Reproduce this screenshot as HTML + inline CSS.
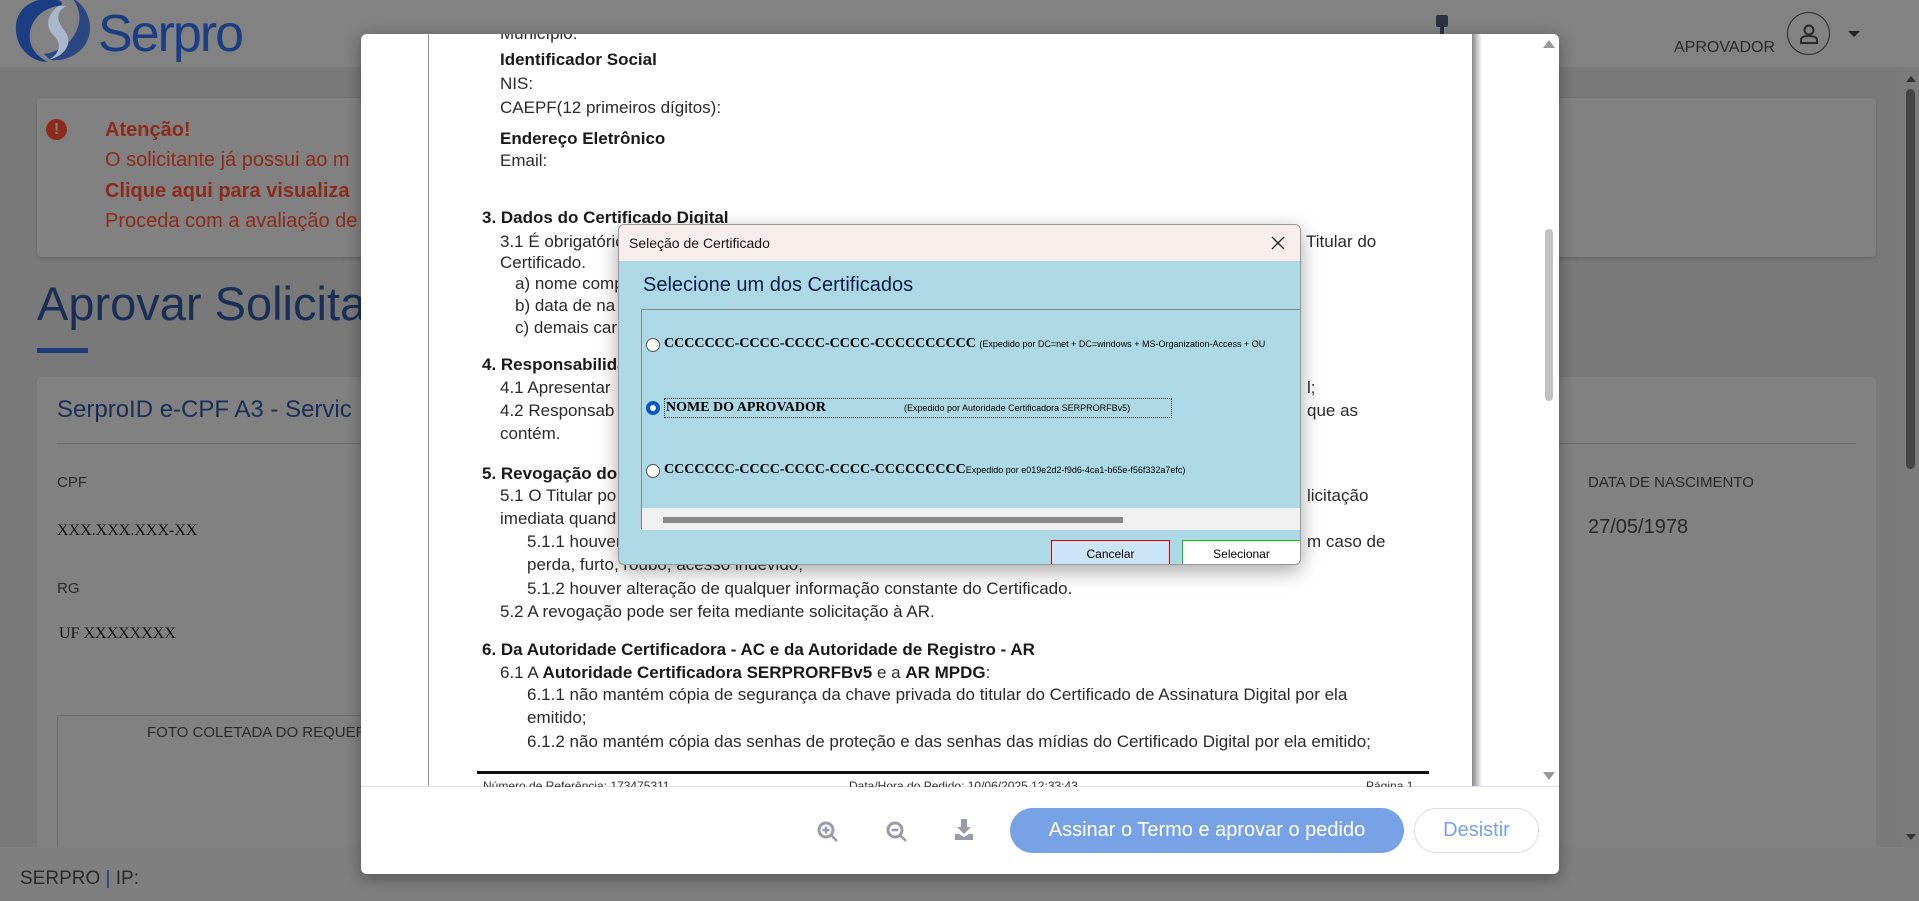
<!DOCTYPE html>
<html><head><meta charset="utf-8"><style>
*{margin:0;padding:0;box-sizing:border-box}
body{width:1919px;height:901px;overflow:hidden;background:#797979;font-family:"Liberation Sans",sans-serif;position:relative}
.a{position:absolute;white-space:nowrap}
.pd{font-size:17px;color:#2a2a2a}
.pd b{font-weight:bold;color:#1a1a1a}
.dlg{font-family:"Liberation Sans",sans-serif}
</style></head><body>
<!-- header -->
<div class="a" style="left:0;top:0;width:1919px;height:67px;background:#828282"></div>
<svg class="a" style="left:14px;top:0" width="80" height="64" viewBox="0 0 80 64"><path d="M40 -2 C14 -2 0 12 2 32 C4 50 18 62 34 62 C22 56 14 46 16 32 C18 18 30 8 44 6 C48 5 52 3 40 -2Z" fill="#1b3d83"/><path d="M36 60 C58 62 76 48 76 28 C76 12 66 2 58 -2 C66 8 68 20 62 32 C56 44 44 52 30 54Z" fill="#1b3d83" opacity=".85"/><path d="M44 6 C34 14 30 26 40 36 C48 44 46 54 34 60 C52 56 60 42 50 30 C42 20 42 12 52 6Z" fill="#a9b6cc"/></svg>
<div class="a" style="left:98px;top:4px;font-size:52px;color:#1b3d83;letter-spacing:-2px">Serpro</div>
<div class="a" style="left:1436px;top:15px;width:12px;height:12px;background:#2e3140;border-radius:2px"></div>
<div class="a" style="left:1440px;top:27px;width:4px;height:8px;background:#2e3140"></div>
<div class="a" style="left:1674px;top:39px;font-size:16px;color:#2a2a2a">APROVADOR</div>
<div class="a" style="left:1787px;top:12px;width:43px;height:43px;border:1.5px solid #2a2a2a;border-radius:50%"></div>
<svg class="a" style="left:1797px;top:22px" width="24" height="24" viewBox="0 0 24 24"><circle cx="12" cy="8" r="4.5" fill="none" stroke="#2a2a2a" stroke-width="2"/><path d="M4 21v-3c0-3 3-4 8-4s8 1 8 4v3z" fill="none" stroke="#2a2a2a" stroke-width="2"/></svg>
<div class="a" style="left:1848px;top:31px;border-left:6px solid transparent;border-right:6px solid transparent;border-top:6px solid #222"></div>
<!-- page scrollbar -->
<div class="a" style="left:1903px;top:67px;width:16px;height:780px;background:#7b7b7b"></div>
<div class="a" style="left:1906px;top:76px;border-left:5px solid transparent;border-right:5px solid transparent;border-bottom:6px solid #333"></div>
<div class="a" style="left:1906px;top:89px;width:9px;height:380px;background:#444;border-radius:5px"></div>
<div class="a" style="left:1906px;top:834px;border-left:5px solid transparent;border-right:5px solid transparent;border-top:6px solid #333"></div>
<!-- alert card -->
<div class="a" style="left:37px;top:98px;width:1839px;height:159px;background:#818181;border-radius:4px;box-shadow:0 1px 3px rgba(0,0,0,.2)"></div>
<div class="a" style="left:46px;top:119px;width:21px;height:21px;border-radius:50%;background:#8c2b1c;color:#818181;font-weight:bold;font-size:16px;text-align:center;line-height:21px">!</div>
<div class="a" style="left:105px;top:119px;font-size:20px;color:#8c2b1c;font-weight:bold">Atenção!</div>
<div class="a" style="left:105px;top:149px;font-size:20px;color:#8c2b1c">O solicitante já possui ao m</div>
<div class="a" style="left:105px;top:180px;font-size:20px;color:#8c2b1c;font-weight:bold">Clique aqui para visualiza</div>
<div class="a" style="left:105px;top:210px;font-size:20px;color:#8c2b1c">Proceda com a avaliação de</div>
<div class="a" style="left:37px;top:276px;font-size:47px;color:#1b2e55">Aprovar Solicita</div>
<div class="a" style="left:37px;top:348px;width:51px;height:5px;background:#1d3d7a"></div>
<!-- data card -->
<div class="a" style="left:37px;top:377px;width:1839px;height:480px;background:#818181;border-radius:4px"></div>
<div class="a" style="left:57px;top:396px;font-size:24px;color:#1b2e55">SerproID e-CPF A3 - Servic</div>
<div class="a" style="left:57px;top:443px;width:1799px;height:1px;background:#6e6e6e"></div>
<div class="a" style="left:57px;top:474px;font-size:15px;color:#2a2a2a">CPF</div>
<div class="a" style="left:57px;top:522px;font-size:16px;color:#111;font-family:'Liberation Serif',serif">XXX.XXX.XXX-XX</div>
<div class="a" style="left:57px;top:580px;font-size:15px;color:#2a2a2a">RG</div>
<div class="a" style="left:59px;top:625px;font-size:16px;color:#111;font-family:'Liberation Serif',serif">UF XXXXXXXX</div>
<div class="a" style="left:57px;top:715px;width:320px;height:140px;border:1px solid #6e6e6e;border-radius:3px"></div>
<div class="a" style="left:147px;top:724px;font-size:15px;color:#2a2a2a">FOTO COLETADA DO REQUERE</div>
<div class="a" style="left:1588px;top:474px;font-size:15px;color:#2a2a2a">DATA DE NASCIMENTO</div>
<div class="a" style="left:1588px;top:516px;font-size:20px;color:#2a2a2a">27/05/1978</div>
<!-- footer -->
<div class="a" style="left:0;top:847px;width:1919px;height:54px;background:#7f7f7f"></div>
<div class="a" style="left:20px;top:868px;font-size:19px;color:#2a2a2a">SERPRO <span style="color:#1d3d7a">|</span> IP:</div>
<!-- modal -->
<div class="a" style="left:361px;top:34px;width:1198px;height:840px;background:#fff;border-radius:6px;box-shadow:0 4px 16px rgba(0,0,0,.35);overflow:hidden">
 <div class="a" style="left:67px;top:0;width:1px;height:752px;background:#999"></div>
 <div class="a" style="left:1111px;top:0;width:10px;height:752px;background:linear-gradient(90deg,#888,#fff)"></div>
 <div class="a" style="left:1176px;top:0;width:22px;height:752px;background:#fff"></div>
 <div class="a" style="left:1182px;top:6px;border-left:6px solid transparent;border-right:6px solid transparent;border-bottom:8px solid #999"></div>
 <div class="a" style="left:1182px;top:738px;border-left:6px solid transparent;border-right:6px solid transparent;border-top:8px solid #999"></div>
 <div class="a" style="left:1184px;top:195px;width:8px;height:172px;background:#c1c1c1;border-radius:4px"></div>
 <div class="a" style="left:0;top:752px;width:1198px;height:1px;background:#dde3ea"></div>
 <div class="pd">
  <div class="a" style="left:139px;top:-10px">Município:</div>
  <div class="a" style="left:139px;top:16px"><b>Identificador Social</b></div>
  <div class="a" style="left:139px;top:40px">NIS:</div>
  <div class="a" style="left:139px;top:64px">CAEPF(12 primeiros dígitos):</div>
  <div class="a" style="left:139px;top:95px"><b>Endereço Eletrônico</b></div>
  <div class="a" style="left:139px;top:117px">Email:</div>
  <div class="a" style="left:121px;top:174px"><b>3. Dados do Certificado Digital</b></div>
  <div class="a" style="left:139px;top:198px">3.1 É obrigatório</div>
  <div class="a" style="left:945px;top:198px">Titular do</div>
  <div class="a" style="left:139px;top:219px">Certificado.</div>
  <div class="a" style="left:154px;top:240px">a) nome comp</div>
  <div class="a" style="left:154px;top:262px">b) data de na</div>
  <div class="a" style="left:154px;top:284px">c) demais car</div>
  <div class="a" style="left:121px;top:321px"><b>4. Responsabilidade</b></div>
  <div class="a" style="left:139px;top:344px">4.1 Apresentar</div>
  <div class="a" style="left:946px;top:344px">l;</div>
  <div class="a" style="left:139px;top:367px">4.2 Responsab</div>
  <div class="a" style="left:946px;top:367px">que as</div>
  <div class="a" style="left:139px;top:390px">contém.</div>
  <div class="a" style="left:121px;top:430px"><b>5. Revogação do</b></div>
  <div class="a" style="left:139px;top:452px">5.1 O Titular po</div>
  <div class="a" style="left:946px;top:452px">licitação</div>
  <div class="a" style="left:139px;top:475px">imediata quand</div>
  <div class="a" style="left:166px;top:498px">5.1.1 houver</div>
  <div class="a" style="left:946px;top:498px">m caso de</div>
  <div class="a" style="left:166px;top:521px">perda, furto, roubo, acesso indevido;</div>
  <div class="a" style="left:166px;top:545px">5.1.2 houver alteração de qualquer informação constante do Certificado.</div>
  <div class="a" style="left:139px;top:568px">5.2 A revogação pode ser feita mediante solicitação à AR.</div>
  <div class="a" style="left:121px;top:606px"><b>6. Da Autoridade Certificadora - AC e da Autoridade de Registro - AR</b></div>
  <div class="a" style="left:139px;top:629px">6.1 A <b>Autoridade Certificadora SERPRORFBv5</b> e a <b>AR MPDG</b>:</div>
  <div class="a" style="left:166px;top:651px">6.1.1 não mantém cópia de segurança da chave privada do titular do Certificado de Assinatura Digital por ela</div>
  <div class="a" style="left:166px;top:674px">emitido;</div>
  <div class="a" style="left:166px;top:698px">6.1.2 não mantém cópia das senhas de proteção e das senhas das mídias do Certificado Digital por ela emitido;</div>
 </div>
 <div class="a" style="left:116px;top:737px;width:952px;height:3px;background:#111"></div>
 <div class="a" style="left:122px;top:745px;font-size:12px;color:#333">Número de Referência: 173475311</div>
 <div class="a" style="left:488px;top:745px;font-size:12px;color:#333">Data/Hora do Pedido: 10/06/2025 12:33:43</div>
 <div class="a" style="left:1005px;top:745px;font-size:12px;color:#333">Página 1</div>
 <div class="a" style="left:0;top:753px;width:1198px;height:87px;background:#fff"></div>
 <svg class="a" style="left:456px;top:787px" width="22" height="22" viewBox="0 0 22 22"><circle cx="9" cy="9" r="7" fill="none" stroke="#9a9aaa" stroke-width="3"/><path d="M14 14l6 6M5.5 9h7M9 5.5v7" stroke="#9a9aaa" stroke-width="2.5"/></svg>
 <svg class="a" style="left:525px;top:787px" width="22" height="22" viewBox="0 0 22 22"><circle cx="9" cy="9" r="7" fill="none" stroke="#9a9aaa" stroke-width="3"/><path d="M14 14l6 6M5.5 9h7" stroke="#9a9aaa" stroke-width="2.5"/></svg>
 <svg class="a" style="left:593px;top:785px" width="20" height="22" viewBox="0 0 20 22"><path d="M7 0h6v8h4l-7 7-7-7h4z M1 15h4l5 3 5-3h4v6H1z" fill="#9a9aaa"/></svg>
 <div class="a" style="left:649px;top:774px;width:394px;height:45px;background:#77a3e6;border-radius:23px;color:#fff;font-size:20px;text-align:center;line-height:45px">Assinar o Termo e aprovar o pedido</div>
 <div class="a" style="left:1053px;top:774px;width:125px;height:45px;border:1px solid #ddd;border-radius:23px;color:#77a3e6;font-size:20px;text-align:center;line-height:43px">Desistir</div>
</div>
<!-- certificate dialog -->
<div class="a dlg" style="left:618px;top:224px;width:683px;height:341px;background:#add8e6;border:1px solid #999;border-radius:6px;box-shadow:0 6px 20px rgba(0,0,0,.35);overflow:hidden">
 <div class="a" style="left:0;top:0;width:683px;height:36px;background:#f7eeec"></div>
 <div class="a" style="left:10px;top:10px;font-size:14px;color:#111">Seleção de Certificado</div>
 <svg class="a" style="left:652px;top:11px" width="14" height="14" viewBox="0 0 14 14"><path d="M1 1l12 12M13 1L1 13" stroke="#222" stroke-width="1.3"/></svg>
 <div class="a" style="left:24px;top:49px;font-size:20px;color:#0b1d4a">Selecione um dos Certificados</div>
 <div class="a" style="left:22px;top:84px;width:660px;height:220px;border:1px solid #888;background:#add8e6">
  <div class="a" style="left:4px;top:28px;width:14px;height:14px;border-radius:50%;border:1px solid #555;background:#fff"></div>
  <div class="a" style="left:22px;top:26px;font-family:'Liberation Serif',serif;font-weight:bold;font-size:14px;color:#000">CCCCCCC-CCCC-CCCC-CCCC-CCCCCCCCCC <span style="font-family:'Liberation Sans',sans-serif;font-weight:normal;font-size:9px">(Expedido por DC=net + DC=windows + MS-Organization-Access + OU</span></div>
  <div class="a" style="left:4px;top:91px;width:14px;height:14px;border-radius:50%;border:4px solid #0a58c7;background:#fff"></div>
  <div class="a" style="left:22px;top:88px;width:508px;height:20px;border:1px dotted #333"></div>
  <div class="a" style="left:24px;top:90px;font-family:'Liberation Serif',serif;font-weight:bold;font-size:14px;color:#000">NOME DO APROVADOR</div>
  <div class="a" style="left:262px;top:93px;font-size:9px;color:#000">(Expedido por Autoridade Certificadora SERPRORFBv5)</div>
  <div class="a" style="left:4px;top:154px;width:14px;height:14px;border-radius:50%;border:1px solid #555;background:#fff"></div>
  <div class="a" style="left:22px;top:152px;font-family:'Liberation Serif',serif;font-weight:bold;font-size:14px;color:#000">CCCCCCC-CCCC-CCCC-CCCC-CCCCCCCCC<span style="font-family:'Liberation Sans',sans-serif;font-weight:normal;font-size:9px">Expedido por e019e2d2-f9d6-4ca1-b65e-f56f332a7efc)</span></div>
  <div class="a" style="left:0;top:198px;width:660px;height:22px;background:#f0f0f0"></div>
  <div class="a" style="left:21px;top:207px;width:460px;height:6px;background:#888"></div>
 </div>
 <div class="a" style="left:432px;top:315px;width:119px;height:30px;background:#cce4f7;border:1px solid #c00;border-top-color:#e00;font-size:12px;text-align:center;line-height:26px;color:#000">Cancelar</div>
 <div class="a" style="left:563px;top:315px;width:119px;height:30px;background:#fff;border:1px solid #0c0;font-size:12px;text-align:center;line-height:26px;color:#000">Selecionar</div>
</div>
</body></html>
